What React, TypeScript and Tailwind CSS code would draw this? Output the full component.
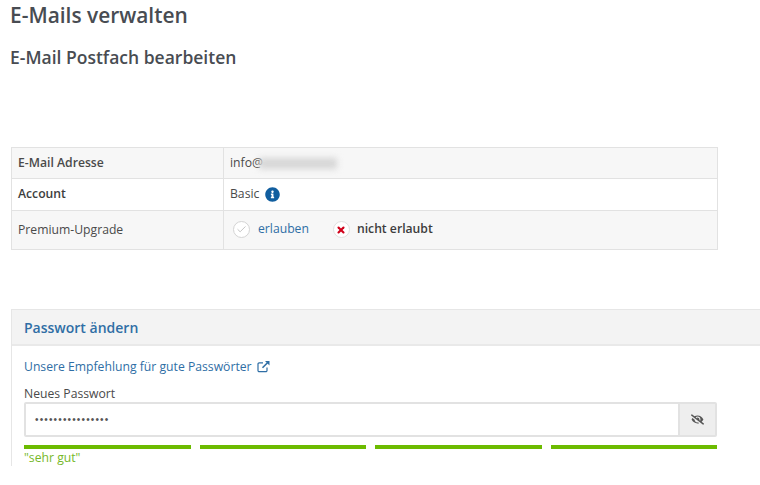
import { Check, X } from "lucide-react";
import { FaEyeSlash, FaInfoCircle } from "react-icons/fa";

const bars = [0, 1, 2, 3];

export default function App() {
  return (
    <div className="w-[760px] h-[485px] overflow-hidden bg-white font-['Open_Sans',sans-serif] text-[#4a4a4a]">
      {/* Page headings */}
      <h1 className="pl-[10px] pt-[2px] text-[20.9px] leading-[27px] font-semibold text-[#484c52]">E-Mails verwalten</h1>
      <h2 className="pl-[10px] pt-[17px] text-[17.5px] leading-[23px] font-semibold text-[#484c52]">E-Mail Postfach bearbeiten</h2>

      {/* Account table */}
      <div className="mt-[78px] ml-[11px] w-[707px] border border-[#e2e2e2] text-[12.2px]">
        <div className="flex h-[31px] bg-[#f7f7f7] border-b border-[#e2e2e2]">
          <div className="w-[212px] pl-[6px] pt-[1px] flex items-center font-semibold border-r border-[#e2e2e2]">E-Mail Adresse</div>
          <div className="pl-[6px] pt-[1px] flex items-center">
            info@
            <span className="w-[78px] h-[11px] -ml-[4px] bg-[#d6d6d6] blur-[3px]" />
          </div>
        </div>
        <div className="flex h-[32px] border-b border-[#e2e2e2]">
          <div className="w-[212px] pl-[6px] flex items-center font-semibold border-r border-[#e2e2e2] text-[#3d3d3d]">Account</div>
          <div className="pl-[6px] flex items-center gap-[6px]">
            Basic
            <FaInfoCircle className="w-[15px] h-[15px] text-[#115e9f]" />
          </div>
        </div>
        <div className="flex h-[38px] bg-[#f7f7f7]">
          <div className="w-[212px] pl-[6px] flex items-center border-r border-[#e2e2e2]">Premium-Upgrade</div>
          <div className="pl-[9px] flex items-center -mt-[1px]">
            <span className="w-[17px] h-[17px] rounded-full border-[1.5px] border-[#d4d4d4] bg-white flex items-center justify-center">
              <Check className="w-[11px] h-[11px] text-[#bdbdbd]" strokeWidth={2} />
            </span>
            <span className="ml-[8px] text-[#2f6ea5]">erlauben</span>
            <span className="ml-[24px] w-[17px] h-[17px] rounded-full border-[1.5px] border-[#e0e0e0] bg-white flex items-center justify-center">
              <X className="w-[10px] h-[10px] text-[#d0021b]" strokeWidth={5} />
            </span>
            <span className="ml-[7px] font-semibold text-[#3d3d3d]">nicht erlaubt</span>
          </div>
        </div>
      </div>

      {/* Password panel */}
      <div className="mt-[59px] ml-[11px] border-l border-t border-[#e6e6e6] text-[12.2px]">
        <div className="h-[36px] pl-[12px] flex items-center bg-[#f3f3f3] border-b-2 border-[#e9e9e9] text-[14px] font-semibold text-[#2f6ea5]">
          Passwort ändern
        </div>
        <div className="pl-[12px] w-[705px]">
          <div className="pt-[4px] h-[39px] flex items-center gap-[5px] text-[#2f6ea5]">
            Unsere Empfehlung für gute Passwörter
            <svg viewBox="0 0 13 13" className="w-[13px] h-[13px] -mt-[2px]" fill="none" stroke="currentColor">
              <path d="M10 7.5v3a1.2 1.2 0 0 1-1.2 1.2H2.2A1.2 1.2 0 0 1 1 10.500V4a1.200 1.200 0 0 1 1.200-1.200H6" strokeWidth="1.200" />
              <path d="M5.500 7.700 11 2.200" strokeWidth="1.600" />
              <path d="M8 1h4.500v4.500z" fill="currentColor" stroke="none" />
            </svg>
          </div>
          <div className="h-[17px] pt-[2px] flex items-center">Neues Passwort</div>
          <div className="flex h-[35px] border-2 border-[#e2e2e2] rounded-[2px]">
            <div className="flex-1 pl-[9px] flex items-center bg-white text-[#555] text-[10px] tracking-[1.15px] font-['Liberation_Sans',sans-serif]">
              ••••••••••••••••
            </div>
            <div className="w-[37px] border-l-2 border-[#e2e2e2] bg-[#eeeeee] flex items-center justify-center">
              <FaEyeSlash className="w-[13px] h-[13px] text-[#555]" />
            </div>
          </div>
          <div className="mt-[8px] grid grid-cols-4 gap-[9px]">
            {bars.map((b) => (
              <div key={b} className="h-[4px] bg-[#6cbb00]" />
            ))}
          </div>
          <div className="mt-[1px] leading-[16px] text-[#76b82a]">"sehr gut"</div>
        </div>
      </div>
    </div>
  );
}
